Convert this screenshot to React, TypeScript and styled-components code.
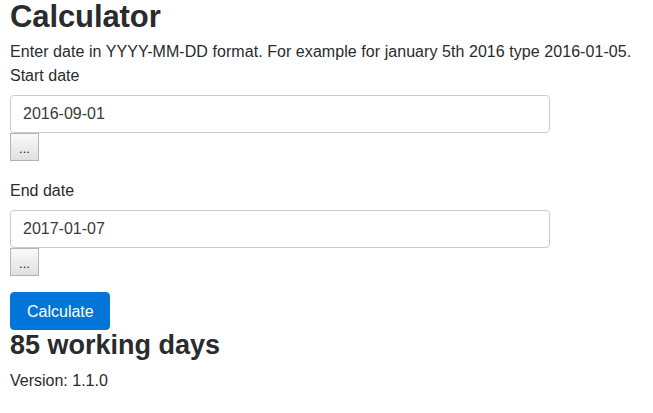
import styled, { createGlobalStyle } from "styled-components";

const GlobalStyle = createGlobalStyle`
  html, body {
    margin: 0;
    padding: 0;
    background: #fff;
  }

  body {
    font-family: "Liberation Sans", Arial, sans-serif;
    color: #292b2c;
  }
`;

const Page = styled.div`
  display: flex;
  flex-direction: column;
  align-items: flex-start;
  padding: 0 10px;
`;

const Title = styled.h1`
  margin: 0;
  font-size: 31px;
  line-height: 34px;
  font-weight: 700;
  letter-spacing: -0.1px;
`;

const Intro = styled.p`
  margin: 7px 0 0;
  font-size: 16px;
  line-height: 22px;
  letter-spacing: 0.06px;
`;

const Label = styled.label<{ $top: number }>`
  display: block;
  margin: ${(p) => p.$top}px 0 8px;
  font-size: 16px;
  line-height: 22px;
`;

const DateInput = styled.input`
  box-sizing: border-box;
  width: 540px;
  height: 38px;
  margin: 0;
  padding: 0 12px;
  border: 1px solid #ccc;
  border-radius: 4px;
  font-family: inherit;
  font-size: 16px;
  color: #3a3a3a;
  background: #fff;
  outline: none;
`;

const PickerButton = styled.button`
  box-sizing: border-box;
  width: 29px;
  height: 28px;
  margin: 0;
  padding: 3px 0 0;
  border: 1px solid #b4b4b4;
  border-radius: 0;
  background: linear-gradient(#fafafa, #e0e0e0);
  font-family: inherit;
  font-size: 13px;
  color: #222;
  line-height: 1;
`;

const CalcButton = styled.button`
  box-sizing: border-box;
  height: 38px;
  margin: 16px 0 0;
  padding: 2px 16px 0;
  width: 100px;
  border: 1px solid #0275d8;
  border-radius: 4px;
  background: #0275d8;
  color: #fff;
  font-family: inherit;
  font-size: 16px;
`;

const Result = styled.h3`
  margin: 0;
  font-size: 27px;
  line-height: 30px;
  font-weight: 700;
`;

const Version = styled.div`
  margin-top: 11px;
  font-size: 16px;
  line-height: 20px;
`;

function DateField({ label, value, top }: { label: string; value: string; top: number }) {
  return (
    <>
      <Label $top={top}>{label}</Label>
      <DateInput defaultValue={value} />
      <PickerButton>...</PickerButton>
    </>
  );
}

export default function App() {
  return (
    <>
      <GlobalStyle />
      <Page>
        <Title>Calculator</Title>
        <Intro>
          Enter date in YYYY-MM-DD format. For example for january 5th 2016 type 2016-01-05.
        </Intro>
        <DateField label="Start date" value="2016-09-01" top={2} />
        <DateField label="End date" value="2017-01-07" top={19} />
        <CalcButton>Calculate</CalcButton>
        <Result>85 working days</Result>
        <Version>Version: 1.1.0</Version>
      </Page>
    </>
  );
}
